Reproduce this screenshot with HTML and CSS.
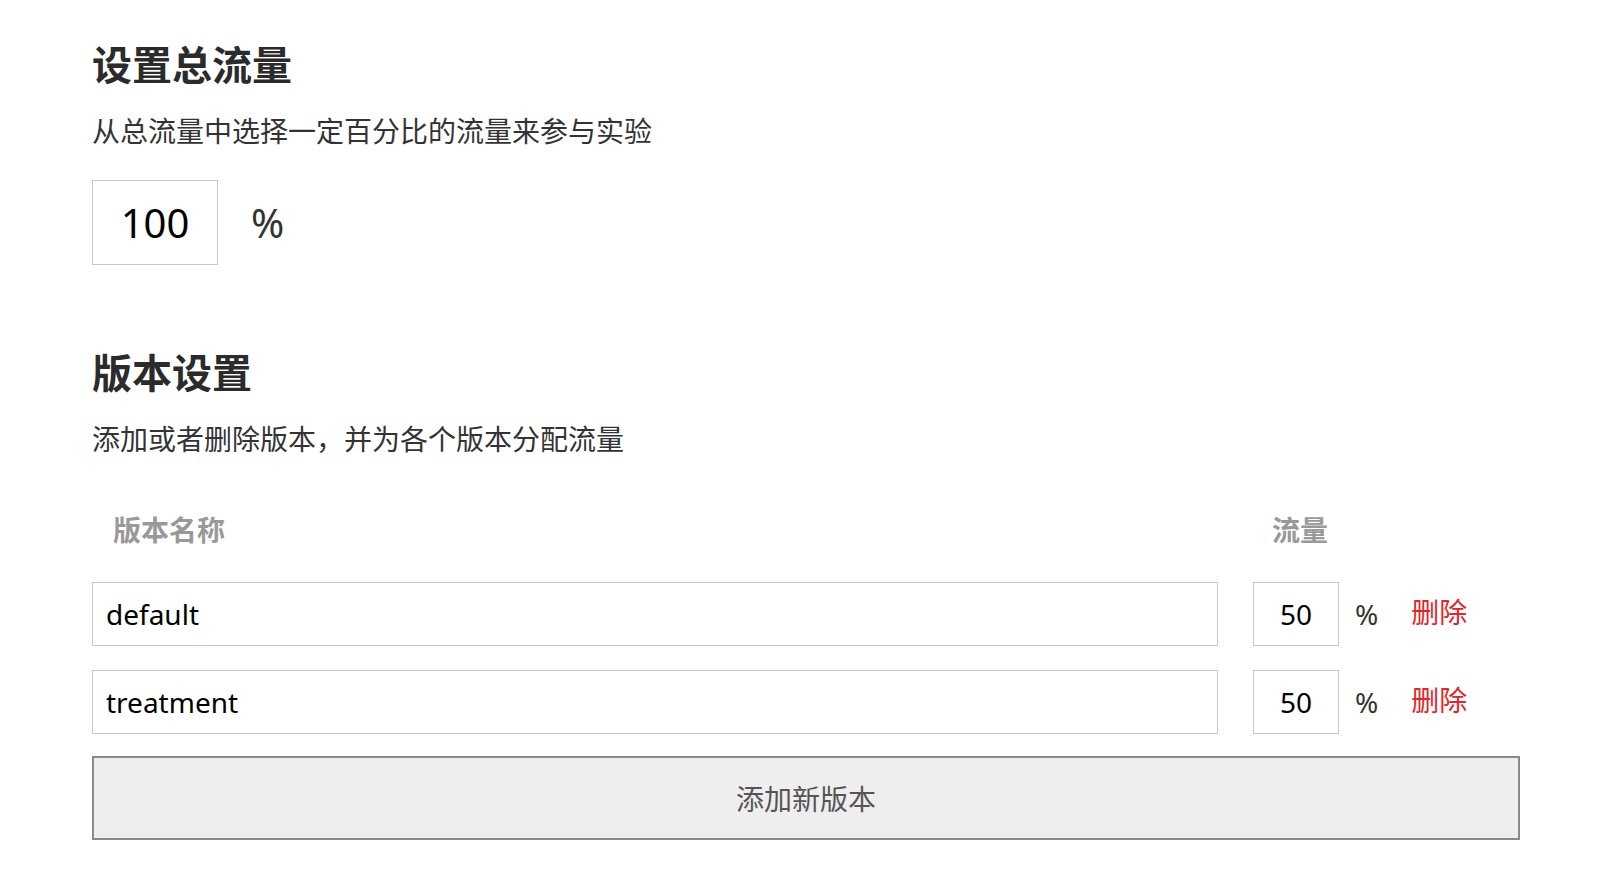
FILE: index.html
```html
<!DOCTYPE html>
<html lang="zh-CN">
<head>
  <meta charset="UTF-8">
  <meta name="viewport" content="width=device-width, initial-scale=1.0">
  <title>流量设置</title>
  <link rel="stylesheet" href="styles.css">
</head>
<body>
  <div id="container">
    <!-- 总流量 -->
    <section class="block">
      <h2>设置总流量</h2>
      <p class="desc">从总流量中选择一定百分比的流量来参与实验</p>
      <div class="total">
        <input type="text" class="total-input" value="100">
        <span class="total-unit">%</span>
      </div>
    </section>

    <!-- 版本设置 -->
    <section class="block versions">
      <h2>版本设置</h2>
      <p class="desc">添加或者删除版本，并为各个版本分配流量</p>
      <div class="table-head">
        <span class="col-name">版本名称</span>
        <span class="col-traffic">流量</span>
      </div>
      <div id="rows">
        <div class="row">
          <input type="text" class="name-input" value="default">
          <input type="text" class="traffic-input" value="50">
          <span class="unit">%</span>
          <a class="delete" href="#">删除</a>
        </div>
        <div class="row">
          <input type="text" class="name-input" value="treatment">
          <input type="text" class="traffic-input" value="50">
          <span class="unit">%</span>
          <a class="delete" href="#">删除</a>
        </div>
      </div>
      <button id="addVersion">添加新版本</button>
    </section>
  </div>
</body>
</html>
```

FILE: styles.css
```css
body {
  font-family: "Noto Sans", "Noto Sans CJK SC", sans-serif;
  color: #333;
  margin: 0;
  padding: 0 86px 0 92px;
}
#container {
  width: 1428px;
}
h2 {
  font-size: 40px;
  line-height: 48px;
  font-weight: bold;
  color: #2b2b2b;
  margin: 0;
}
.block {
  padding-top: 41px;
}
.versions {
  padding-top: 84px;
}
.desc {
  font-size: 28px;
  line-height: 40px;
  margin: 22px 0 0;
}
.total {
  display: flex;
  align-items: center;
  gap: 33px;
  margin-top: 29px;
}
input {
  font-family: inherit;
  color: #000;
  border: 1px solid #c8c8c8;
  box-sizing: border-box;
  outline: none;
  margin: 0;
}
.total-input {
  width: 126px;
  height: 85px;
  font-size: 40px;
  text-align: center;
  padding: 0;
}
.total-unit {
  font-size: 40px;
}
.table-head {
  display: grid;
  grid-template-columns: 1161px 1fr;
  font-size: 28px;
  line-height: 40px;
  font-weight: bold;
  color: #999;
  margin-top: 51px;
}
.col-name {
  padding-left: 21px;
}
.col-traffic {
  padding-left: 19px;
}
#rows {
  display: flex;
  flex-direction: column;
  gap: 24px;
  margin-top: 32px;
}
.row {
  display: flex;
  align-items: center;
  height: 64px;
}
.name-input {
  width: 1126px;
  height: 64px;
  font-size: 28px;
  padding: 0 13px;
}
.traffic-input {
  width: 86px;
  height: 64px;
  font-size: 28px;
  text-align: center;
  padding: 0;
  margin-left: 35px;
}
.unit {
  font-size: 28px;
  margin-left: 16px;
}
.delete {
  font-size: 28px;
  color: #e0262a;
  text-decoration: none;
  margin-left: 33px;
  margin-top: -6px;
}
#addVersion {
  display: block;
  width: 100%;
  height: 84px;
  margin-top: 22px;
  background: #eee;
  border: 2px solid #8a8a8a;
  font-family: inherit;
  font-size: 28px;
  color: #555;
  cursor: pointer;
}
```
